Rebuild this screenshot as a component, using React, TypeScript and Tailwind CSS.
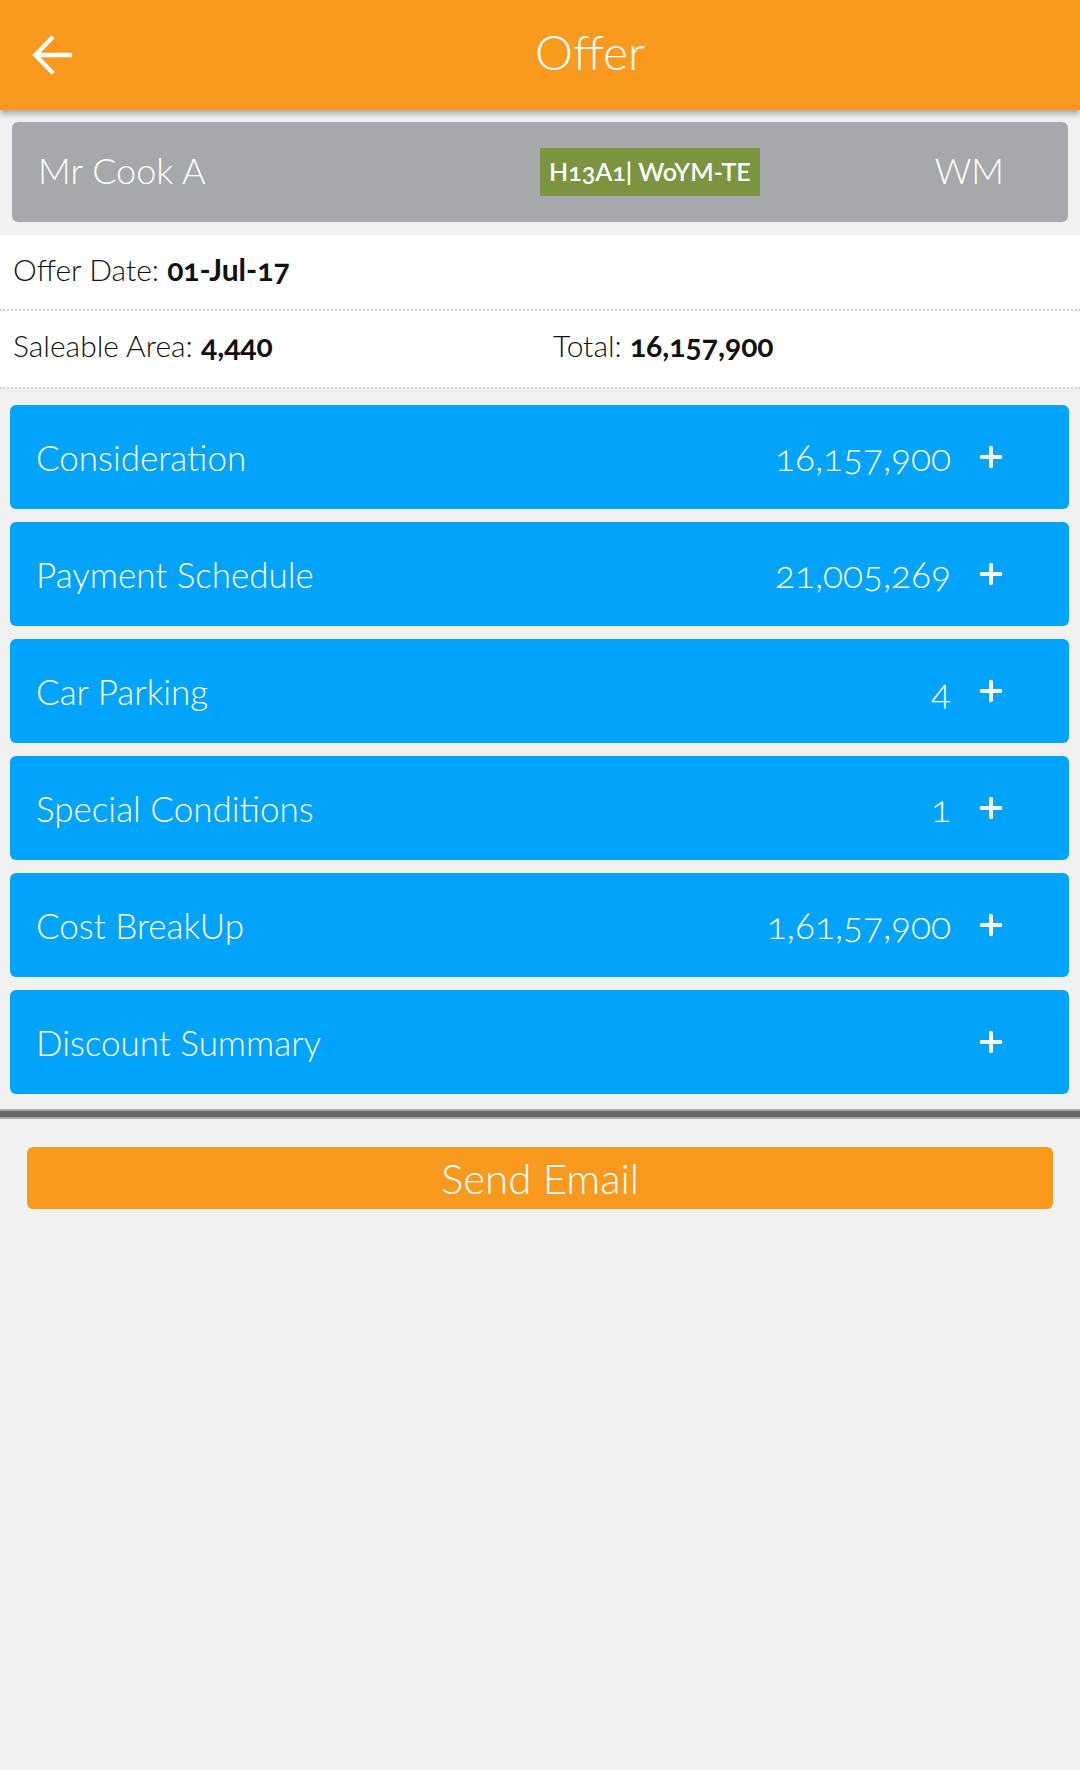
import { Plus } from "lucide-react";

type Section = {
  title: string;
  value?: string;
};

const sections: Section[] = [
  { title: "Consideration", value: "16,157,900" },
  { title: "Payment Schedule", value: "21,005,269" },
  { title: "Car Parking", value: "4" },
  { title: "Special Conditions", value: "1" },
  { title: "Cost BreakUp", value: "1,61,57,900" },
  { title: "Discount Summary" },
];

export default function App() {
  return (
    <div className="min-h-[1770px] w-[1080px] bg-[#f1f1f1] font-['Lato','Open_Sans',sans-serif] [font-variant-numeric:oldstyle-nums]">
      {/* top bar */}
      <header className="relative z-10 flex h-[110px] items-center bg-[#f99a1e] shadow-[0_4px_6px_rgba(0,0,0,0.3)]">
        <button type="button" className="flex w-[100px] items-center pl-[32px] text-white">
          <svg viewBox="0 0 44 44" className="h-[42px] w-[42px]" fill="none" stroke="currentColor" strokeWidth={4.5}>
            <path d="M42 22H4" />
            <path d="M22 3 3.5 22 22 41" />
          </svg>
        </button>
        <h1 className="flex-1 pb-[6px] text-center text-[48px] font-light text-white">Offer</h1>
      </header>

      {/* customer card */}
      <div className="px-[12px] pt-[12px]">
        <div className="flex h-[100px] items-center rounded-[6px] bg-[#a7a8ab] pl-[26px] pr-[64px] text-white">
          <span className="w-[502px] pb-[4px] text-[36px] font-light">Mr Cook A</span>
          <span className="flex h-[48px] items-center bg-[#7a9440] px-[9px] text-[25px] font-semibold">
            H13A1| WoYM-TE
          </span>
          <span className="ml-auto pb-[4px] text-[36px] font-light">WM</span>
        </div>
      </div>

      {/* offer info */}
      <div className="mt-[13px] bg-white">
        <div className="flex h-[76px] items-center border-b-2 border-dotted border-[#cfcfcf] px-[13px] pb-[6px] text-[30px] text-[#111]">
          <span className="font-light">Offer Date:&nbsp;</span>
          <span className="font-bold">01-Jul-17</span>
        </div>
        <div className="flex h-[78px] items-center border-b-2 border-dotted border-[#cfcfcf] px-[13px] pb-[8px] text-[30px] text-[#111]">
          <div className="w-[540px]">
            <span className="font-light">Saleable Area:&nbsp;</span>
            <span className="font-bold">4,440</span>
          </div>
          <div>
            <span className="font-light">Total:&nbsp;</span>
            <span className="font-bold">16,157,900</span>
          </div>
        </div>
      </div>

      {/* sections */}
      <div className="flex flex-col gap-[13px] pl-[10px] pr-[11px] pt-[16px]">
        {sections.map((s) => (
          <div
            key={s.title}
            className="flex h-[104px] items-center rounded-[6px] bg-[#02a3fb] pl-[26px] pr-[62px] text-white"
          >
            <span className="text-[35px] font-light">{s.title}</span>
            <span className="ml-auto text-[37px] font-light">{s.value}</span>
            <Plus className="ml-[24px] h-[32px] w-[32px]" strokeWidth={3} />
          </div>
        ))}
      </div>

      {/* divider */}
      <div className="mt-[15px] h-[10px] border-y-2 border-[#a9a9a9] bg-[#676767]" />

      <div className="px-[27px] pt-[28px]">
        <button
          type="button"
          className="flex h-[62px] w-full items-center justify-center rounded-[6px] bg-[#f99a1e] text-[42px] font-light text-white"
        >
          Send Email
        </button>
      </div>
    </div>
  );
}
